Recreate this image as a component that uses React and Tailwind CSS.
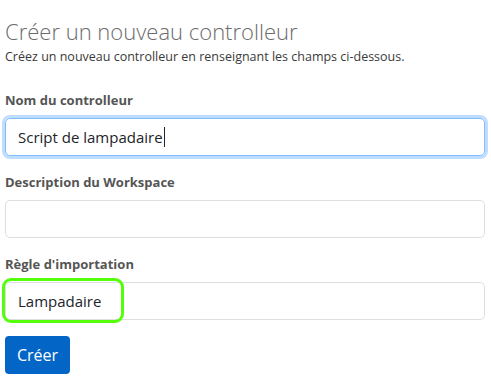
export default function App() {
  return (
    <div className="min-h-screen bg-white pl-[5px] pr-[6px] pt-[16px] font-['Open_Sans',sans-serif]">
      <h3 className="text-[22px] font-light leading-[30px] text-[#6b6b6b]">
        Créer un nouveau controlleur
      </h3>
      <p className="mt-[1px] text-[12.5px] leading-[20px] text-[#3a3a3a]">
        Créez un nouveau controlleur en renseignant les champs ci-dessous.
      </p>

      <form className="mt-[23px]" onSubmit={(e) => e.preventDefault()}>
        <div className="mb-4">
          <label className="mb-2 block text-[13px] font-bold leading-[20px] text-[#555]">
            Nom du controlleur
          </label>
          <div className="flex h-[38px] w-full items-center rounded-[5px] border border-[#80bdff] px-3 text-[15px] text-[#212529] shadow-[0_0_0_3px_rgba(0,123,255,0.25)]">
            Script de lampadaire
            <span className="ml-px h-[20px] w-px bg-[#222]" />
          </div>
        </div>

        <div className="mb-4">
          <label className="mb-2 block text-[13px] font-bold leading-[20px] text-[#555]">
            Description du Workspace
          </label>
          <input
            type="text"
            className="block h-[38px] w-full rounded-[5px] border border-[#dcdee2] px-3 text-[15px] text-[#212529] outline-none"
          />
        </div>

        <div className="mb-4">
          <label className="mb-2 block text-[13px] font-bold leading-[20px] text-[#555]">
            Règle d'importation
          </label>
          <div className="relative">
            <input
              type="text"
              defaultValue="Lampadaire"
              className="block h-[38px] w-full rounded-[5px] border border-[#dcdee2] px-3 text-[15px] text-[#212529] outline-none"
            />
            <div className="pointer-events-none absolute -left-[3px] -top-[4px] h-[45px] w-[122px] rounded-[9px] border-[3px] border-[#55ff0a]" />
          </div>
        </div>

        <button
          type="submit"
          className="h-[38px] rounded-[4px] bg-[#0366c6] px-3 text-[16px] text-white"
        >
          Créer
        </button>
      </form>
    </div>
  );
}
